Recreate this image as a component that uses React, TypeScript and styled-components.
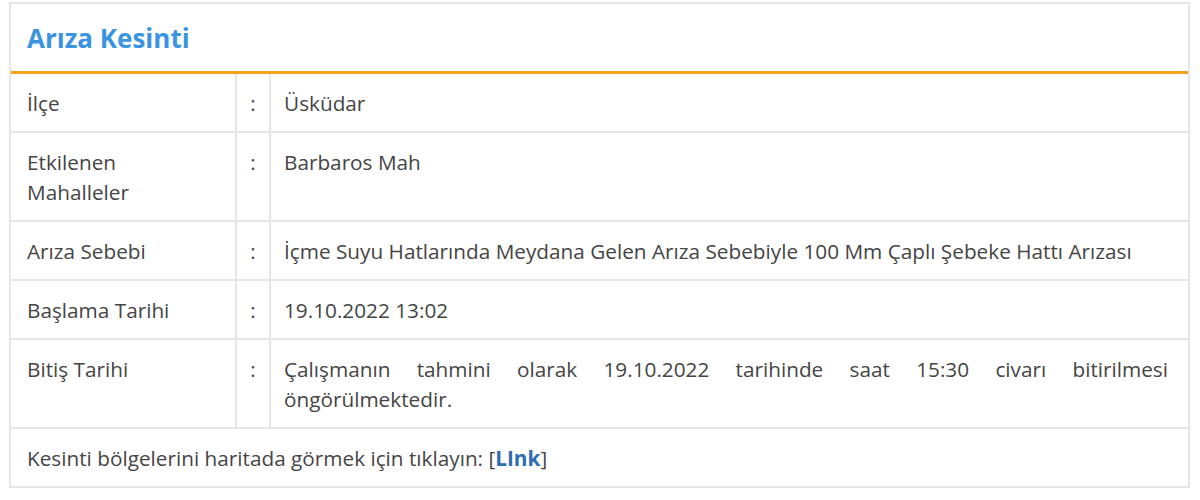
import React from 'react'
import styled, { createGlobalStyle } from 'styled-components'

const GlobalStyle = createGlobalStyle`
  body {
    margin: 0;
    background: #fff;
    font-family: 'Open Sans', 'Noto Sans', sans-serif;
    color: #454545;
  }
`

const rows = [
  { label: 'İlçe', value: 'Üsküdar' },
  { label: 'Etkilenen Mahalleler', value: 'Barbaros Mah' },
  {
    label: 'Arıza Sebebi',
    value: 'İçme Suyu Hatlarında Meydana Gelen Arıza Sebebiyle 100 Mm Çaplı Şebeke Hattı Arızası',
  },
  { label: 'Başlama Tarihi', value: '19.10.2022 13:02' },
  {
    label: 'Bitiş Tarihi',
    value: 'Çalışmanın tahmini olarak 19.10.2022 tarihinde saat 15:30 civarı bitirilmesi öngörülmektedir.',
  },
]

function App() {
  return (
    <>
      <GlobalStyle />
      <Page>
        <Card>
          <Header>
            <Title>Arıza Kesinti</Title>
          </Header>
          <Table>
            <tbody>
              {rows.map((row) => (
                <tr key={row.label}>
                  <LabelCell>{row.label}</LabelCell>
                  <ColonCell>:</ColonCell>
                  <ValueCell>{row.value}</ValueCell>
                </tr>
              ))}
            </tbody>
          </Table>
          <Footer>
            Kesinti bölgelerini haritada görmek için tıklayın: [<MapLink href="#">LInk</MapLink>]
          </Footer>
        </Card>
      </Page>
    </>
  )
}

export default App

const Page = styled.div`
  padding: 2px 10px 0 9px;
`

const Card = styled.div`
  border: 2px solid #e6e6e6;
  background: #fff;
`

const Header = styled.div`
  display: flex;
  align-items: center;
  height: 67px;
  padding: 0 16px;
  border-bottom: 3px solid #f7a21b;
`

const Title = styled.h2`
  margin: 0;
  font-size: 26px;
  font-weight: 700;
  color: #3a94e2;
`

const Table = styled.table`
  width: 100%;
  border-collapse: collapse;
  font-size: 20.75px;
  line-height: 30px;

  td {
    border-bottom: 2px solid #e6e6e6;
    vertical-align: top;
    padding: 14px 16px 13px;
  }
`

const LabelCell = styled.td`
  width: 192px;
  border-right: 2px solid #e6e6e6;
`

const ColonCell = styled.td`
  && {
    width: 32px;
    padding-left: 0;
    padding-right: 0;
  }
  text-align: center;
  border-right: 2px solid #e6e6e6;
`

const ValueCell = styled.td`
  && {
    padding-left: 13px;
    padding-right: 20px;
  }
  text-align: justify;
`

const Footer = styled.div`
  padding: 14px 16px 13px;
  font-size: 20.75px;
  line-height: 30px;
`

const MapLink = styled.a`
  color: #2c6db3;
  font-weight: 700;
  text-decoration: none;
`
